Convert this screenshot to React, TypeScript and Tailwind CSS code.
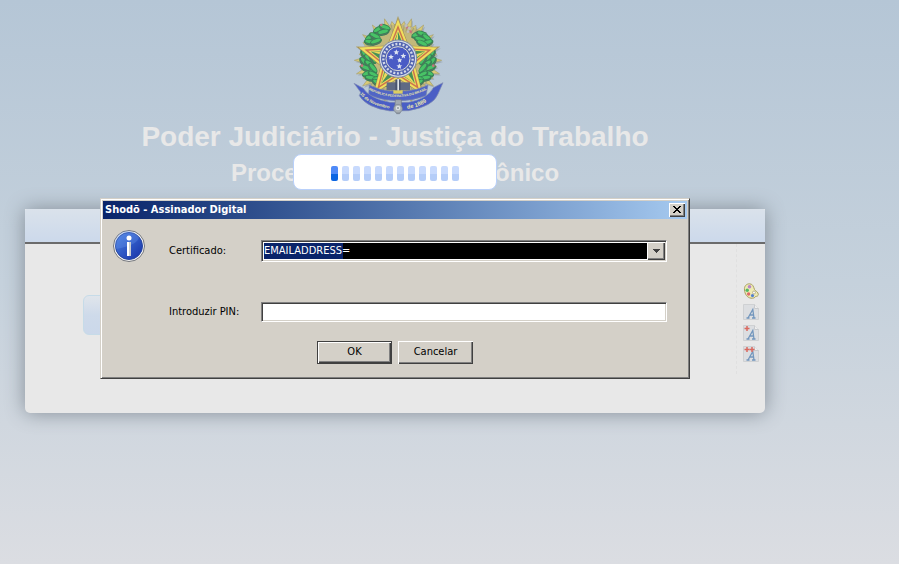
import React, { useState } from 'react';
import clsx from 'clsx';

const CERTIFICATES = ['EMAILADDRESS='];
const BAR_COUNT = 12;

const raised =
  'bg-[#d4d0c8] shadow-[inset_1px_1px_#fff,inset_-1px_-1px_#404040,inset_-2px_-2px_#808080]';
const sunken =
  'border border-t-[#808080] border-l-[#808080] border-r-white border-b-white shadow-[inset_1px_1px_#404040,inset_-1px_-1px_#d4d0c8]';

// Points of a five-pointed star around (cx, cy)
const star = (cx: number, cy: number, outer: number, inner: number) =>
  Array.from({ length: 10 }, (_, i) => {
    const r = i % 2 ? inner : outer;
    const a = (Math.PI / 5) * i - Math.PI / 2;
    return `${(cx + r * Math.cos(a)).toFixed(1)},${(cy + r * Math.sin(a)).toFixed(1)}`;
  }).join(' ');

const sunburst = () =>
  Array.from({ length: 80 }, (_, i) => {
    const r = i % 2 ? 104 : i % 4 ? 118 : 131;
    const a = (Math.PI / 40) * i - Math.PI / 2;
    return `${(174 + r * Math.cos(a)).toFixed(1)},${(166 + r * Math.sin(a)).toFixed(1)}`;
  }).join(' ');

// x, y, rotation of every leaf in the two branches
const LEAVES = [
  [116, 74, -30], [134, 68, 20], [130, 82, -15], [90, 98, -40], [104, 94, 25], [90, 112, 10], [108, 110, -20],
  [74, 150, 55], [86, 162, 40], [72, 172, 50], [88, 178, 35], [98, 160, 60], [78, 190, 20], [98, 190, 50],
  [84, 206, -20], [100, 210, 30], [92, 220, 10], [114, 222, -10], [130, 234, 20], [112, 234, 30],
  [232, 90, -20], [246, 88, 20], [260, 100, 40], [240, 104, 15], [262, 114, -20], [246, 116, 25],
  [274, 150, -55], [262, 162, -40], [276, 172, -50], [260, 178, -35], [250, 164, -60], [270, 190, -20], [250, 190, -50],
  [264, 206, 20], [248, 210, -30], [256, 220, -10], [234, 222, 10], [218, 234, -20], [236, 234, -30],
];

const CoatOfArms = () => (
  <svg
    viewBox="-15 0 360 360"
    className="mx-auto block h-[120px] w-[120px] opacity-90"
    role="img"
    aria-label="Brasão da República"
  >
    <polygon points={sunburst()} fill="#7f848c" opacity="0.45" transform="translate(4 5)" />
    <polygon points={sunburst()} fill="#dccb6c" stroke="#a89c60" strokeWidth="2" />
    <circle cx="174" cy="166" r="108" fill="#c4b772" />
    <circle
      cx="174"
      cy="166"
      r="98"
      fill="none"
      stroke="#8d8a68"
      strokeWidth="22"
      strokeDasharray="3 6"
      opacity="0.6"
    />
    {LEAVES.map(([x, y, r], i) => (
      <g key={i} transform={`translate(${x} ${y}) rotate(${r})`}>
        <ellipse rx="19" ry="10" fill="#2b7a48" />
        <ellipse rx="15" ry="5" cy="-2" fill="#3cc25a" />
        <path d="M-14 5L12 7" stroke="#55695a" strokeWidth="2" />
      </g>
    ))}
    <g fill="#c96a74">
      <circle cx="124" cy="60" r="4" />
      <circle cx="202" cy="68" r="4" />
      <circle cx="212" cy="80" r="4" />
      <circle cx="66" cy="182" r="4" />
      <circle cx="280" cy="182" r="4" />
    </g>
    <g fill="#c0bcb8">
      <circle cx="198" cy="62" r="5" />
      <circle cx="208" cy="70" r="5" />
      <circle cx="204" cy="80" r="4" />
    </g>
    <polygon points={star(174, 166, 128, 55)} fill="#9b7e4a" />
    <polygon points={star(174, 166, 124, 53)} fill="#f6e250" />
    <polygon points={star(174, 166, 106, 46)} fill="#cf6a3f" />
    <polygon points={star(174, 166, 94, 41)} fill="#f2dc50" />
    <polygon points={star(174, 166, 86, 37)} fill="#3d8b4a" />
    <path d="M174 80V166H150ZM256 139L174 166L190 185ZM225 236L174 166L174 200ZM123 236L174 166L150 160ZM92 139L174 166L150 140Z" fill="#f2dc50" />
    <circle cx="174" cy="161" r="56" fill="#d9dfe8" stroke="#73809f" strokeWidth="3" />
    <circle cx="174" cy="161" r="51" fill="#4659ac" />
    <circle
      cx="174"
      cy="161"
      r="44"
      fill="none"
      stroke="#d7dcec"
      strokeWidth="7"
      strokeDasharray="6 5"
    />
    <circle cx="174" cy="161" r="36" fill="#3f50c4" stroke="#e0dfd5" strokeWidth="3" />
    <g fill="#e4e9f5">
      <polygon points={star(169, 142, 9, 4)} />
      <polygon points={star(153, 156, 9, 4)} />
      <polygon points={star(190, 153, 9, 4)} />
      <polygon points={star(179, 166, 8, 4)} />
      <polygon points={star(178, 184, 9, 4)} />
    </g>
    <path d="M140 232h70v24h-70z" fill="#56607c" />
    <path d="M166 224h16v40h-16z" fill="#3e4964" />
    <path d="M172 222h5v40h-5z" fill="#e5e9ee" />
    <path
      d="M88 240Q120 256 150 258H198Q230 256 264 240L258 272Q174 304 86 270Z"
      fill="#465bc4"
      stroke="#6e7aa8"
      strokeWidth="2"
    />
    <path
      d="M42 235L70 250Q88 280 150 292L206 292Q264 280 280 248L309 233L294 267Q280 304 206 317L150 318Q80 308 58 272L62 262Z"
      fill="#3e53c4"
      stroke="#7b87ae"
      strokeWidth="2"
    />
    <path id="ribbon-top" d="M86 254Q174 300 268 250" fill="none" />
    <path id="ribbon-bottom" d="M60 266Q84 302 158 312" fill="none" />
    <path id="ribbon-right" d="M202 312Q262 302 288 262" fill="none" />
    <g fill="#efe9a6" fontFamily="Liberation Sans" fontWeight="bold">
      <text fontSize="10">
        <textPath href="#ribbon-top">REPUBLICA FEDERATIVA DO BRASIL</textPath>
      </text>
      <text fontSize="13">
        <textPath href="#ribbon-bottom">15 de Novembro</textPath>
      </text>
      <text fontSize="17">
        <textPath href="#ribbon-right">de 1889</textPath>
      </text>
    </g>
    <path d="M160 256h28v10h-28z" fill="#e0cf55" />
    <path d="M166 284h18v30l-5 12h-9l-6-12z" fill="#9fa6ae" stroke="#686f80" strokeWidth="2" />
    <circle cx="174" cy="311" r="13" fill="#a8aeb2" stroke="#737b87" strokeWidth="2" />
    <circle cx="174" cy="309" r="7" fill="#dfe2e3" />
    <circle cx="174" cy="309" r="3" fill="#8e959b" />
  </svg>
);

const InfoIcon = () => (
  <svg viewBox="0 0 32 32" className="h-8 w-8 shrink-0" aria-hidden="true">
    <defs>
      <linearGradient id="info-blue" x1="0" y1="0" x2="1" y2="1">
        <stop offset="0" stopColor="#4b82e4" />
        <stop offset="1" stopColor="#1530a6" />
      </linearGradient>
    </defs>
    <circle cx="16" cy="16" r="15.5" fill="#f3f3f3" stroke="#75777c" />
    <circle cx="16" cy="16" r="13.5" fill="url(#info-blue)" stroke="#2746a0" />
    <path d="M3 19A13 13 0 0 1 26 7Q25 15 3 19Z" fill="#6d9af0" opacity="0.3" />
    <circle cx="16" cy="8" r="2.5" fill="#fff" />
    <path d="M14 12h4v14h-4z" fill="#c9ccd0" />
    <path d="M14 12h2v14h-2z" fill="#fff" />
  </svg>
);

const PaletteIcon = () => (
  <svg viewBox="0 0 16 16" className="h-4 w-4" aria-hidden="true">
    <path
      d="M1.500 7C1 3 3.500.8 6.500.8C10 .8 10.500 4 11.500 6.500C12.500 8 15.300 9 15.300 11.500C15.300 13 14 13.400 12.500 13.500C11.800 15 10 15.400 8 15.200C4 14.600 1.800 11 1.500 7Z"
      fill="#eeeab4"
      stroke="#a89f62"
    />
    <circle cx="6.500" cy="3.800" r="1.800" fill="#b784c9" />
    <circle cx="4.200" cy="7.200" r="1.700" fill="#55b865" />
    <circle cx="5.600" cy="11" r="1.700" fill="#e06a68" />
    <circle cx="9.500" cy="12.600" r="1.600" fill="#527fd0" />
    <circle cx="11" cy="9.500" r="1.500" fill="#f5f5f5" stroke="#a8a078" strokeWidth="0.700" />
  </svg>
);

const FontIcon = ({ marks }: { marks: number }) => (
  <svg viewBox="0 0 16 16" className="h-4 w-4" aria-hidden="true">
    <path d="M.5.5h11l4 4v11H.5z" fill="#dcdee1" stroke="#cfd1d3" />
    <path d="M11.500.5v4h4" fill="#eee" stroke="#c8cacd" />
    <path
      d="M3.500 14h3M9 14h3.500M5 14L9.800 5.500L11 14M6.500 11h4.300"
      fill="none"
      stroke="#7296bd"
      strokeWidth="1.300"
    />
    {marks > 0 && <path d="M1.500 3.500h5M4 1v5" stroke="#d9695f" strokeWidth="1.500" />}
    {marks > 1 && <path d="M6.500 3.500h5M9 1v5" stroke="#d9695f" strokeWidth="1.500" />}
  </svg>
);

const Loader = () => (
  <div
    role="status"
    aria-label="Carregando"
    className="absolute top-[154px] left-1/2 flex h-9 w-[204px] -translate-x-1/2 items-center justify-center gap-1 rounded-lg border border-[#b9d0fa] bg-white pt-0.5"
  >
    {Array.from({ length: BAR_COUNT }, (_, i) => (
      <span
        key={i}
        className={clsx(
          'h-[15px] w-[7px] rounded-xs',
          i === 0
            ? 'bg-[linear-gradient(#4f8af8_50%,#0b65e2_50%)]'
            : 'bg-[linear-gradient(#c8dafd_50%,#b5cdf8_50%)]'
        )}
      />
    ))}
  </div>
);

const SignerDialog = () => {
  const [certificate, setCertificate] = useState(CERTIFICATES[0]);
  const [pin, setPin] = useState('');

  return (
    <form
      role="dialog"
      aria-labelledby="signer-title"
      onSubmit={(e) => e.preventDefault()}
      className="absolute top-[198px] left-1/2 w-[590px] -translate-x-1/2 border border-t-[#d4d0c8] border-r-[#404040] border-b-[#404040] border-l-[#d4d0c8] bg-[#d4d0c8] p-0.5 font-['DejaVu_Sans_Condensed','DejaVu_Sans',sans-serif] text-[11px] text-black shadow-[inset_1px_1px_#fff,inset_-1px_-1px_#808080]"
    >
      {/* Title bar */}
      <div className="flex h-[18px] items-center justify-between bg-linear-to-r from-[#0a246a] to-[#a6caf0] px-0.5">
        <h3 id="signer-title" className="font-bold text-white">
          Shodō - Assinador Digital
        </h3>
        <button
          type="button"
          aria-label="Fechar"
          className={clsx(raised, 'flex h-[14px] w-4 items-center justify-center pr-px pb-px')}
        >
          <svg viewBox="0 0 8 7" className="h-[7px] w-2" shapeRendering="crispEdges">
            <path
              d="M0 0h2v1h1v1h2V1h1V0h2v1H7v1H6v1H5v1h1v1h1v1h1v1H6V6H5V5H3v1H2v1H0V6h1V5h1V4h1V3H2V2H1V1H0z"
              fill="#000"
            />
          </svg>
        </button>
      </div>

      <div className="flex gap-6 pt-[11px] pr-5 pl-2.5">
        <InfoIcon />
        <div className="grid flex-1 grid-cols-[92px_1fr] items-center gap-y-10 pt-2.5">
          {/* Certificado */}
          <label htmlFor="certificate">Certificado:</label>
          <div className="relative">
            <select
              id="certificate"
              value={certificate}
              onChange={(e) => setCertificate(e.target.value)}
              className={clsx(
                sunken,
                'block h-[22px] w-full appearance-none rounded-none bg-white bg-[linear-gradient(90deg,#0a246a_79px,#000_79px)] bg-origin-content bg-clip-border bg-no-repeat p-0.5 text-white'
              )}
            >
              {CERTIFICATES.map((name) => (
                <option key={name}>{name}</option>
              ))}
            </select>
            <span
              className={clsx(
                raised,
                'pointer-events-none absolute top-0.5 right-0.5 flex h-[18px] w-[18px] items-center justify-center'
              )}
            >
              <svg viewBox="0 0 7 4" className="h-1 w-[7px]" shapeRendering="crispEdges">
                <path d="M0 0h7v1H6v1H5v1H4v1H3V3H2V2H1V1H0z" fill="#404040" />
              </svg>
            </span>
          </div>

          {/* PIN */}
          <label htmlFor="pin">Introduzir PIN:</label>
          <input
            id="pin"
            type="password"
            value={pin}
            onChange={(e) => setPin(e.target.value)}
            className={clsx(sunken, 'h-5 w-full bg-white px-1 outline-none')}
          />
        </div>
      </div>

      <div className="flex justify-center gap-1.5 pt-[19px] pb-3">
        <button
          type="submit"
          className="h-[23px] w-[75px] border border-[#404040] bg-[#d4d0c8] shadow-[inset_1px_1px_#fff,inset_-1px_-1px_#404040,inset_-2px_-2px_#808080]"
        >
          OK
        </button>
        <button type="button" className={clsx(raised, 'h-[23px] w-[75px]')}>
          Cancelar
        </button>
      </div>
    </form>
  );
};

const App: React.FC = () => {
  return (
    <div className="min-h-screen bg-linear-to-b from-[#b5c6d6] via-[#c5d1dc] to-[#dbdde2] px-[25px] font-['Liberation_Sans',Arial,sans-serif]">
      <div className="relative max-w-[740px] pt-[5px]">
        <header className="text-center font-bold text-[#e8e8e8]">
          <CoatOfArms />
          <h1 className="text-[28px] leading-6">Poder Judiciário - Justiça do Trabalho</h1>
          <h2 className="mt-3 text-2xl leading-6">Processo Judicial Eletrônico</h2>
        </header>

        {/* Login panel */}
        <main className="mt-6 rounded-b-[5px] bg-[#e8e8e8] shadow-[0_0_20px_#848d96]">
          <div className="h-[35px] rounded-t-xs border-b-2 border-[#6b6b6b] bg-linear-to-b from-[#dae2eb] to-[#ccd9eb]" />
          <div className="flex h-[169px] justify-between pl-[58px]">
            <div className="mt-[51px] h-10 w-1/2 rounded-md border border-[#c6dbe8] bg-linear-to-b from-[#e0e5eb] via-[#cedaea] to-[#cbd8ea]" />
            <nav
              aria-label="Acessibilidade"
              className="flex h-[130px] flex-col gap-[5px] self-start border-l border-dashed border-[#e0e0e0] px-1.5 pt-[39px]"
            >
              <button type="button" aria-label="Alto contraste">
                <PaletteIcon />
              </button>
              <button type="button" aria-label="Fonte normal">
                <FontIcon marks={0} />
              </button>
              <button type="button" aria-label="Fonte maior">
                <FontIcon marks={1} />
              </button>
              <button type="button" aria-label="Fonte muito maior">
                <FontIcon marks={2} />
              </button>
            </nav>
          </div>
        </main>

        <Loader />
        <SignerDialog />
      </div>
    </div>
  );
};

export default App;
